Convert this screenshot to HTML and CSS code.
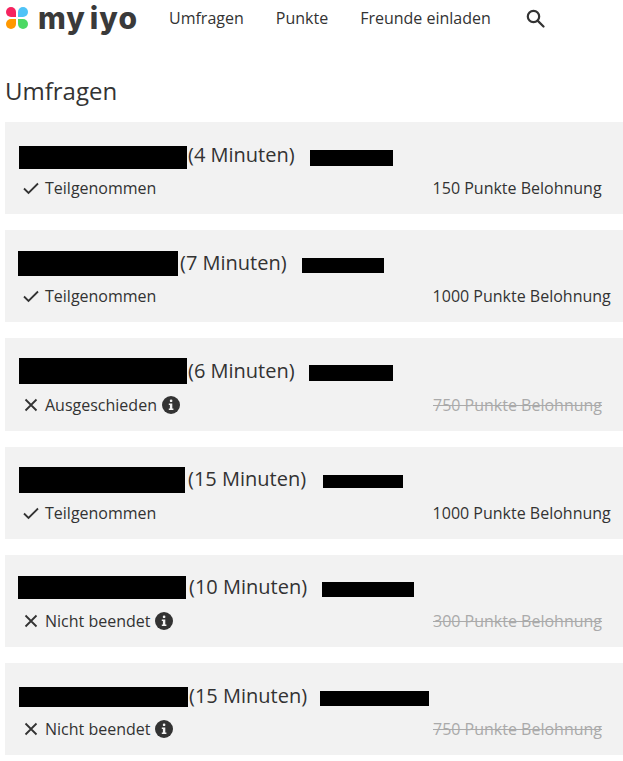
FILE: index.html
```html
<!DOCTYPE html>
<html lang="de">
<head>
    <meta charset="UTF-8">
    <meta name="viewport" content="width=device-width, initial-scale=1.0">
    <title>myiyo Umfragen</title>
    <link rel="stylesheet" href="styles.css">
</head>
<body>
    <header class="topbar">
        <a class="logo" href="#">
            <svg class="logo-mark" width="24" height="24" viewBox="0 0 24 24">
                <path fill="#f5245f" d="M6 1h0a5 5 0 0 1 5 5v5H6A5 5 0 0 1 6 1z"/>
                <path fill="#4fc3f7" d="M18 1a5 5 0 0 1 0 10h-5V6a5 5 0 0 1 5-5z"/>
                <path fill="#ff9800" d="M6 13h5v5a5 5 0 0 1-10 0 5 5 0 0 1 5-5z"/>
                <path fill="#4cd964" d="M13 13h5a5 5 0 0 1 0 10 5 5 0 0 1-5-5z"/>
            </svg>
            <span class="logo-text">my iyo</span>
        </a>
        <nav class="nav">
            <a href="#">Umfragen</a>
            <a href="#">Punkte</a>
            <a href="#">Freunde einladen</a>
            <a href="#" class="search" aria-label="Suche">
                <svg width="19" height="19" viewBox="0 0 19 19" fill="none" stroke="#333" stroke-width="2.2">
                    <circle cx="7.5" cy="7.5" r="5.7"/>
                    <path d="M11.6 11.6l5.9 5.9" stroke-linecap="round"/>
                </svg>
            </a>
        </nav>
    </header>

    <h1>Umfragen</h1>

    <div class="survey">
        <div class="survey-title"><span class="redact a1"></span><span class="minutes">(4 Minuten)</span><span class="redact b1"></span></div>
        <div class="survey-info">
            <div class="status">
                <svg class="status-icon" width="16" height="16" viewBox="0 0 16 16"><path d="M1 8.5l4.5 4.5L15 3.5" fill="none" stroke="#333" stroke-width="1.8"/></svg>
                Teilgenommen
            </div>
            <div class="reward">150 Punkte Belohnung</div>
        </div>
    </div>

    <div class="survey">
        <div class="survey-title"><span class="redact a2"></span><span class="minutes">(7 Minuten)</span><span class="redact b2"></span></div>
        <div class="survey-info">
            <div class="status">
                <svg class="status-icon" width="16" height="16" viewBox="0 0 16 16"><path d="M1 8.5l4.5 4.5L15 3.5" fill="none" stroke="#333" stroke-width="1.8"/></svg>
                Teilgenommen
            </div>
            <div class="reward">1000 Punkte Belohnung</div>
        </div>
    </div>

    <div class="survey">
        <div class="survey-title"><span class="redact a3"></span><span class="minutes">(6 Minuten)</span><span class="redact b3"></span></div>
        <div class="survey-info">
            <div class="status">
                <svg class="status-icon" width="16" height="16" viewBox="0 0 16 16"><path d="M2.5 2.5l11 11M13.5 2.5l-11 11" fill="none" stroke="#333" stroke-width="1.8"/></svg>
                Ausgeschieden
                <svg class="info-icon" width="18" height="18" viewBox="0 0 18 18"><circle cx="9" cy="9" r="9" fill="#333"/><rect x="7.8" y="3.5" width="2.6" height="2.6" rx="1.2" fill="#f2f2f2"/><path d="M6.8 7.6h3.5v5h1.1v1.4H6.8v-1.4h1.1V9H6.8z" fill="#f2f2f2"/></svg>
            </div>
            <div class="reward lost">750 Punkte Belohnung</div>
        </div>
    </div>

    <div class="survey">
        <div class="survey-title"><span class="redact a4"></span><span class="minutes">(15 Minuten)</span><span class="redact b4"></span></div>
        <div class="survey-info">
            <div class="status">
                <svg class="status-icon" width="16" height="16" viewBox="0 0 16 16"><path d="M1 8.5l4.5 4.5L15 3.5" fill="none" stroke="#333" stroke-width="1.8"/></svg>
                Teilgenommen
            </div>
            <div class="reward">1000 Punkte Belohnung</div>
        </div>
    </div>

    <div class="survey">
        <div class="survey-title"><span class="redact a5"></span><span class="minutes">(10 Minuten)</span><span class="redact b5"></span></div>
        <div class="survey-info">
            <div class="status">
                <svg class="status-icon" width="16" height="16" viewBox="0 0 16 16"><path d="M2.5 2.5l11 11M13.5 2.5l-11 11" fill="none" stroke="#333" stroke-width="1.8"/></svg>
                Nicht beendet
                <svg class="info-icon" width="18" height="18" viewBox="0 0 18 18"><circle cx="9" cy="9" r="9" fill="#333"/><rect x="7.8" y="3.5" width="2.6" height="2.6" rx="1.2" fill="#f2f2f2"/><path d="M6.8 7.6h3.5v5h1.1v1.4H6.8v-1.4h1.1V9H6.8z" fill="#f2f2f2"/></svg>
            </div>
            <div class="reward lost">300 Punkte Belohnung</div>
        </div>
    </div>

    <div class="survey">
        <div class="survey-title"><span class="redact a6"></span><span class="minutes">(15 Minuten)</span><span class="redact b6"></span></div>
        <div class="survey-info">
            <div class="status">
                <svg class="status-icon" width="16" height="16" viewBox="0 0 16 16"><path d="M2.5 2.5l11 11M13.5 2.5l-11 11" fill="none" stroke="#333" stroke-width="1.8"/></svg>
                Nicht beendet
                <svg class="info-icon" width="18" height="18" viewBox="0 0 18 18"><circle cx="9" cy="9" r="9" fill="#333"/><rect x="7.8" y="3.5" width="2.6" height="2.6" rx="1.2" fill="#f2f2f2"/><path d="M6.8 7.6h3.5v5h1.1v1.4H6.8v-1.4h1.1V9H6.8z" fill="#f2f2f2"/></svg>
            </div>
            <div class="reward lost">750 Punkte Belohnung</div>
        </div>
    </div>
</body>
</html>
```

FILE: styles.css
```css
body {
    font-family: "Open Sans", sans-serif;
    margin: 0;
    padding: 0 0 6px 5px;
    background-color: #fff;
    color: #333;
    font-size: 16px;
    overflow: hidden;
}
a {
    color: inherit;
    text-decoration: none;
}
.topbar {
    display: flex;
    align-items: center;
    height: 36px;
}
.logo {
    display: flex;
    align-items: center;
    width: 164px;
}
.logo-mark {
    flex: none;
}
.logo-text {
    margin-left: 9px;
    font-family: Inter, sans-serif;
    font-size: 30px;
    font-weight: 800;
    letter-spacing: 1.1px;
    word-spacing: -4px;
    line-height: 36px;
    color: #3a3a3a;
    white-space: nowrap;
}
.nav {
    display: flex;
    align-items: center;
    gap: 32px;
}
.search {
    display: flex;
    margin-left: 3px;
}
h1 {
    font-size: 24px;
    font-weight: 400;
    line-height: 32px;
    margin: 39px 0 15px;
}
.survey {
    box-sizing: border-box;
    height: 92.2px;
    margin-bottom: 16px;
    padding: 19.6px 0 0 14px;
    background-color: #f2f2f2;
}
.survey-title {
    display: flex;
    align-items: flex-start;
    height: 26px;
    font-size: 20px;
    line-height: 26px;
    white-space: nowrap;
}
.redact {
    display: block;
    flex: none;
    background-color: #000;
}
.a1 { width: 168px; height: 23px; margin: 4.5px 1px 0 0; }
.b1 { width: 83px; height: 16px; margin: 8.5px 0 0 15px; }
.a2 { width: 160px; height: 25px; margin: 1.3px 2px 0 -1px; }
.b2 { width: 82px; height: 15px; margin: 8.3px 0 0 15px; }
.a3 { width: 168px; height: 26px; margin: 0.1px 1px 0 0; }
.b3 { width: 84px; height: 16px; margin: 7.1px 0 0 14px; }
.a4 { width: 166px; height: 26px; margin: 0.9px 3px 0 0; }
.b4 { width: 80px; height: 13px; margin: 8.9px 0 0 17px; }
.a5 { width: 168px; height: 23px; margin: 1.7px 3px 0 -1px; }
.b5 { width: 92px; height: 15px; margin: 7.7px 0 0 15px; }
.a6 { width: 169px; height: 20px; margin: 4.5px 1px 0 0; }
.b6 { width: 109px; height: 15px; margin: 8.5px 0 0 13px; }
.survey-info {
    display: grid;
    grid-template-columns: 413.6px 1fr;
    align-items: center;
    margin-top: 8.6px;
    line-height: 24px;
    white-space: nowrap;
}
.status {
    display: flex;
    align-items: center;
}
.status-icon {
    flex: none;
    margin: 0 6px 0 4px;
}
.info-icon {
    flex: none;
    margin-left: 5px;
}
.reward.lost {
    margin-left: 0.4px;
    color: #aaa;
    text-decoration: line-through;
}
```
